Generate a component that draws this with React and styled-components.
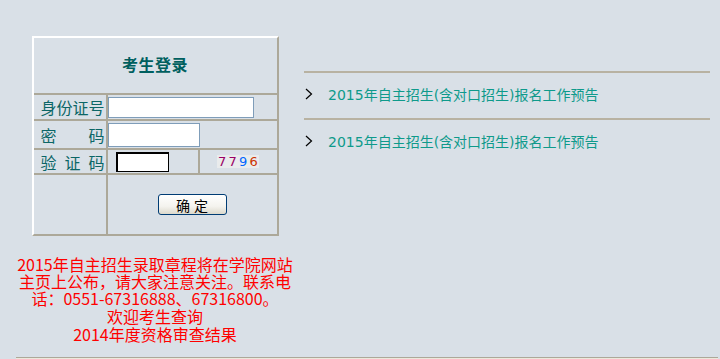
import React from 'react';
import styled, { createGlobalStyle } from 'styled-components';

const GlobalStyle = createGlobalStyle`
  html, body {
    margin: 0;
    padding: 0;
    background: #d9e0e7;
  }
  body {
    font-family: "Noto Sans CJK SC", sans-serif;
  }
`;

// Page shell
const Page = styled.div`
  width: 702px;
  height: 359px;
  margin-left: 16px;
  display: flex;
  flex-direction: column;
  overflow: hidden;
`;

const Main = styled.div`
  display: flex;
  align-items: flex-start;
`;

const LeftCol = styled.div`
  width: 278px;
  padding-top: 36px;
  display: flex;
  flex-direction: column;
  align-items: center;
`;

const RightCol = styled.div`
  width: 406px;
  margin-left: 10px;
  padding-top: 71px;
`;

const Footer = styled.div`
  margin-top: auto;
  height: 1px;
  border-top: 1px solid #aca899;
  background: #ebe8dc;
`;

// Login box
const LoginBox = styled.div`
  box-sizing: border-box;
  width: 247px;
  border: 2px solid;
  border-color: #ffffff #aca899 #aca899 #ffffff;
  background: #aca899;
  display: grid;
  grid-template-columns: 72px 90px 1fr;
  grid-template-rows: 55px 24px 27px 23px 59px;
  gap: 2px;
`;

const Cell = styled.div`
  background: #d9e0e7;
  grid-column: ${(p) => p.$span || 'auto'};
  display: flex;
  align-items: ${(p) => p.$align || 'center'};
  justify-content: ${(p) => p.$justify || 'flex-start'};
  padding: ${(p) => p.$pad || '0'};
  box-sizing: border-box;
`;

const Title = styled.h2`
  margin: 0 0 3px;
  font-size: 16px;
  font-weight: bold;
  color: #005f5f;
  letter-spacing: 0.5px;
`;

const Label = styled.div`
  width: 64px;
  margin-left: 7px;
  display: flex;
  justify-content: space-between;
  font-size: 16px;
  line-height: 18px;
  color: #0b6666;
`;

const TextInput = styled.input`
  box-sizing: border-box;
  width: ${(p) => p.$w}px;
  height: ${(p) => p.$h}px;
  margin: 0;
  padding: 0 2px;
  border: 1px solid #7f9db9;
  background: #ffffff;
  outline: none;
`;

const CodeInput = styled.input`
  box-sizing: border-box;
  width: 53px;
  height: 20px;
  margin: 0 0 0 8px;
  padding: 0;
  border: 1px solid #000;
  box-shadow: inset 1px 1px 0 #000;
  background: #ffffff;
  outline: none;
`;

const Captcha = styled.div`
  width: 42px;
  height: 13px;
  background: #e9ebec;
  display: flex;
  align-items: center;
  justify-content: space-around;
  font-family: "DejaVu Sans", sans-serif;
  font-size: 13px;
  line-height: 13px;
`;

const Digit = styled.span`
  color: ${(p) => p.$c};
`;

const SubmitButton = styled.button`
  box-sizing: border-box;
  width: 69px;
  height: 21px;
  padding: 0;
  border: 1px solid #003c74;
  border-radius: 3px;
  background: linear-gradient(#ffffff, #f4f3ee 60%, #dcd9cc);
  font-family: "Noto Sans CJK SC", sans-serif;
  font-size: 14px;
  line-height: 18px;
  color: #000;
  letter-spacing: 4px;
  text-indent: 4px;
`;

// Notice text
const Notice = styled.p`
  margin: ${(p) => p.$mt || 0}px 0 0;
  width: 278px;
  text-align: center;
  font-size: 16px;
  line-height: ${(p) => p.$lh}px;
  color: #ff0000;
`;

// News list
const NewsItem = styled.a`
  display: flex;
  align-items: center;
  box-sizing: border-box;
  height: 47px;
  padding-bottom: 4px;
  border-top: 2px solid #b8b2a2;
  text-decoration: none;
  font-family: "DejaVu Sans", "Noto Sans CJK SC", sans-serif;
  font-size: 14px;
  color: #0e9a8b;
`;

const Chevron = styled.svg`
  width: 8px;
  height: 12px;
  margin: 0 15px 0 1px;
  flex-shrink: 0;
`;

const news = [
  '2015年自主招生(含对口招生)报名工作预告',
  '2015年自主招生(含对口招生)报名工作预告',
];

const captcha = [
  ['7', '#990066'],
  ['7', '#990066'],
  ['9', '#0066ff'],
  ['6', '#cc3300'],
];

const Spaced = ({ text }) => (
  <Label>
    {text.split('').map((ch, i) => (
      <span key={i}>{ch}</span>
    ))}
  </Label>
);

const App = () => {
  return (
    <>
      <GlobalStyle />
      <Page>
        <Main>
          <LeftCol>
            <LoginBox>
              <Cell $span="1 / 4" $justify="center">
                <Title>考生登录</Title>
              </Cell>

              <Cell>
                <Spaced text="身份证号" />
              </Cell>
              <Cell $span="2 / 4" $align="flex-start" $pad="2px 0 0">
                <TextInput $w={146} $h={21} />
              </Cell>

              <Cell>
                <Spaced text="密码" />
              </Cell>
              <Cell $span="2 / 4" $align="flex-start" $pad="2px 0 0">
                <TextInput type="password" $w={92} $h={24} />
              </Cell>

              <Cell>
                <Spaced text="验证码" />
              </Cell>
              <Cell>
                <CodeInput />
              </Cell>
              <Cell $justify="center">
                <Captcha>
                  {captcha.map(([d, c], i) => (
                    <Digit key={i} $c={c}>{d}</Digit>
                  ))}
                </Captcha>
              </Cell>

              <Cell />
              <Cell $span="2 / 4" $justify="center">
                <SubmitButton>确定</SubmitButton>
              </Cell>
            </LoginBox>

            <Notice $mt={20} $lh={17}>
              2015年自主招生录取章程将在学院网站
              <br />
              主页上公布，请大家注意关注。联系电
              <br />
              话：0551-67316888、67316800。
            </Notice>
            <Notice $lh={18}>
              欢迎考生查询
              <br />
              2014年度资格审查结果
            </Notice>
          </LeftCol>

          <RightCol>
            {news.map((title, i) => (
              <NewsItem key={i} href="#">
                <Chevron viewBox="0 0 8 12">
                  <path d="M1 1 L6.5 6 L1 11" fill="none" stroke="#000" strokeWidth="1.2" />
                </Chevron>
                {title}
              </NewsItem>
            ))}
          </RightCol>
        </Main>
        <Footer />
      </Page>
    </>
  );
};

export default App;
